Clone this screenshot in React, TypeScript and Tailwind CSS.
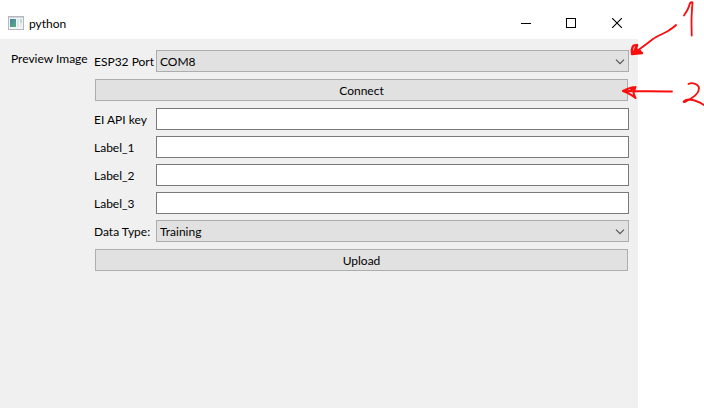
import React, { useId } from 'react';

function AppIcon() {
  return (
    <svg width="16" height="14" viewBox="0 0 16 14" aria-hidden="true">
      <defs>
        <linearGradient id="pane" x1="0" y1="0" x2="1" y2="1">
          <stop offset="0" stopColor="#4a7fa8" />
          <stop offset="1" stopColor="#55b07c" />
        </linearGradient>
      </defs>
      <rect x="0.5" y="0.5" width="15" height="13" fill="#f4f5f6" stroke="#b4b8bc" />
      <rect x="1" y="1" width="14" height="1" fill="#cfd4d8" />
      <rect x="2" y="3" width="6" height="8" fill="url(#pane)" />
      <rect x="9" y="3" width="2" height="8" fill="#e3e7ea" />
      <rect x="12" y="3" width="2" height="4" fill="#b5dcd3" />
      <rect x="12" y="7" width="2" height="4" fill="#e6ecec" />
    </svg>
  );
}

function TitleBar() {
  return (
    <header className="flex h-[39px] items-center bg-white pl-2 pt-[7px]">
      <AppIcon />
      <h1 className="ml-[5px] flex-1 pt-px text-[12px] leading-4">python</h1>
      <button type="button" aria-label="Minimize" className="flex h-8 w-12 items-center justify-center">
        <svg width="10" height="10" viewBox="0 0 10 10">
          <path d="M0 5h10v1H0z" fill="#000" />
        </svg>
      </button>
      <button type="button" aria-label="Maximize" className="flex h-8 w-[42px] items-center justify-center">
        <svg width="10" height="10" viewBox="0 0 10 10" fill="none" stroke="#000">
          <rect x="0.5" y="0.5" width="9" height="9" />
        </svg>
      </button>
      <button type="button" aria-label="Close" className="flex h-8 w-[46px] items-center justify-center pl-1">
        <svg width="10" height="10" viewBox="0 0 10 10" fill="none" stroke="#000" strokeWidth="1.1">
          <path d="M0 0l10 10M10 0L0 10" />
        </svg>
      </button>
    </header>
  );
}

const rowClass = 'flex h-[22px] items-center';
const labelClass = 'w-[62px] shrink-0 whitespace-nowrap pt-px leading-4';

function SelectRow({ label, options }: { label: string; options: string[] }) {
  const id = useId();
  return (
    <div className={rowClass}>
      <label htmlFor={id} className={labelClass}>{label}</label>
      <div className="relative h-full flex-1">
        <select
          id={id}
          className="block h-full w-full appearance-none border border-[#adadad] bg-[#e1e1e1] pl-[3px] pt-px leading-4 outline-none"
        >
          {options.map((o) => (
            <option key={o}>{o}</option>
          ))}
        </select>
        <svg
          className="pointer-events-none absolute right-1 top-[9px]"
          width="10"
          height="6"
          viewBox="0 0 10 6"
          fill="none"
          stroke="#555"
          strokeWidth="1.2"
        >
          <path d="M1 0.7l4 4 4-4" />
        </svg>
      </div>
    </div>
  );
}

function TextRow({ label }: { label: string }) {
  const id = useId();
  return (
    <div className={rowClass}>
      <label htmlFor={id} className={labelClass}>{label}</label>
      <input id={id} type="text" className="h-full min-w-0 flex-1 border border-[#7a7a7a] bg-white px-1 outline-none" />
    </div>
  );
}

function PushButton({ children }: { children: React.ReactNode }) {
  return (
    <button type="button" className="m-px h-[22px] border border-[#adadad] bg-[#e1e1e1] pt-px text-center leading-4">
      {children}
    </button>
  );
}

function Annotations() {
  return (
    <svg
      className="pointer-events-none absolute right-0 top-0"
      width="84"
      height="110"
      viewBox="0 0 84 110"
      fill="none"
      stroke="#fb0d0d"
      strokeWidth="1.8"
      strokeLinecap="round"
      strokeLinejoin="round"
      aria-hidden="true"
    >
      <path d="M64 15.500C66 12.500 68.500 9 69.500 4.500C70 2.500 72 1.500 72.500 2.500C72 9 71.500 16 71.500 21C71.500 26 71.700 31 71.700 35.500" />
      <path d="M56 25C54 27 51 29 48 31C43 34 37 36 33 39C28 43 24 46 17 51" />
      <path d="M17 46C13 43 11 49 12 54L22 53L16 49L17 45L14 52L20 51" strokeWidth="2.400" />
      <path d="M52 91.500C38 91 20 91.500 3.500 91" />
      <path d="M15.500 87C11 87 7 89 3 91C8 93 12 95 15.500 98L13.500 93L15.500 87L9 91.500" strokeWidth="2" />
      <path d="M68.500 84C72 82 79 84 79 88.500C79 94 71 99 65 102C62 103 64 99.500 69 99.500C75 100 79 101.500 84 105" />
    </svg>
  );
}

export default function App() {
  return (
    <div className="relative min-h-screen bg-white pr-[66px] font-[Lato,'Noto_Sans',sans-serif] text-[12px] leading-4 text-black">
      <main className="flex min-h-screen flex-col bg-[#f0f0f0]">
        <TitleBar />
        <div className="flex gap-1.5 pl-[11px] pr-[9px] pt-[11px]">
          <p className="w-[77px] shrink-0 whitespace-nowrap pt-px">Preview Image</p>
          <form className="flex min-w-0 flex-1 flex-col gap-1.5" onSubmit={(e) => e.preventDefault()}>
            <SelectRow label="ESP32 Port" options={['COM8']} />
            <PushButton>Connect</PushButton>
            <TextRow label="EI API key" />
            <TextRow label="Label_1" />
            <TextRow label="Label_2" />
            <TextRow label="Label_3" />
            <SelectRow label="Data Type:" options={['Training', 'Testing']} />
            <PushButton>Upload</PushButton>
          </form>
        </div>
      </main>
      <Annotations />
    </div>
  );
}
